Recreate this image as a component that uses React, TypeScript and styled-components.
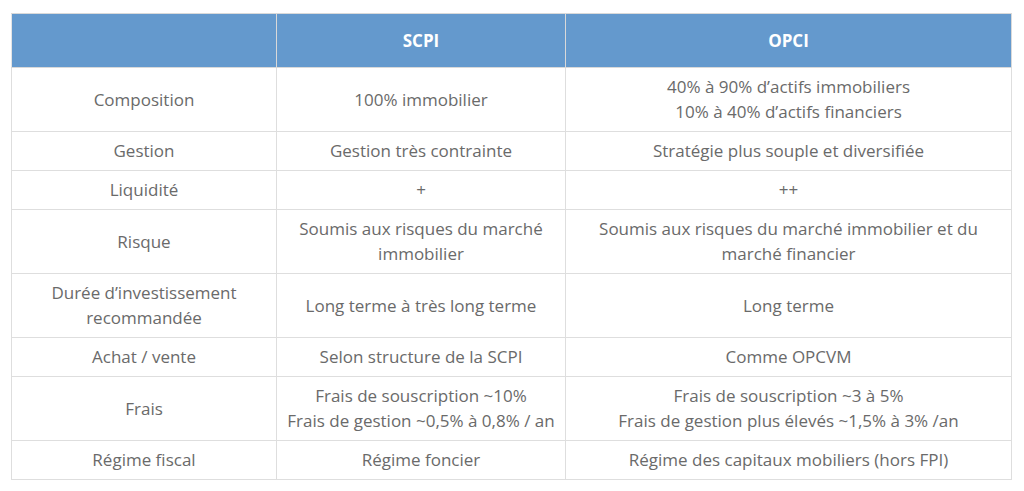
import React from 'react';
import styled, { createGlobalStyle } from 'styled-components';

const GlobalStyle = createGlobalStyle`
  body {
    margin: 0;
    background: #fff;
    font-family: "Open Sans", "Liberation Sans", sans-serif;
  }
`;

const Page = styled.div`
  padding: 13px 0 0 11px;
`;

const Table = styled.table`
  border-collapse: collapse;
  width: 1000px;
  table-layout: fixed;
  font-size: 17px;
  line-height: 25px;
  color: #6a6a6a;
`;

const HeadCell = styled.th`
  background: #6499cd;
  color: #fff;
  font-weight: 700;
  font-size: 17px;
  padding: 14px 4px;
  border: 1px solid #d9d9d9;
  border-left-color: #e4e4e4;
  text-align: center;
`;

const Cell = styled.td`
  padding: 6px 4px 7px;
  border: 1px solid #dedede;
  text-align: center;
  vertical-align: middle;
`;

type Row = { label: React.ReactNode; scpi: React.ReactNode; opci: React.ReactNode };

const rows: Row[] = [
  {
    label: 'Composition',
    scpi: '100% immobilier',
    opci: (
      <>
        40% à 90% d’actifs immobiliers
        <br />
        10% à 40% d’actifs financiers
      </>
    ),
  },
  { label: 'Gestion', scpi: 'Gestion très contrainte', opci: 'Stratégie plus souple et diversifiée' },
  { label: 'Liquidité', scpi: '+', opci: '++' },
  {
    label: 'Risque',
    scpi: (
      <>
        Soumis aux risques du marché
        <br />
        immobilier
      </>
    ),
    opci: (
      <>
        Soumis aux risques du marché immobilier et du
        <br />
        marché financier
      </>
    ),
  },
  {
    label: (
      <>
        Durée d’investissement
        <br />
        recommandée
      </>
    ),
    scpi: 'Long terme à très long terme',
    opci: 'Long terme',
  },
  { label: 'Achat / vente', scpi: 'Selon structure de la SCPI', opci: 'Comme OPCVM' },
  {
    label: 'Frais',
    scpi: (
      <>
        Frais de souscription ~10%
        <br />
        Frais de gestion ~0,5% à 0,8% / an
      </>
    ),
    opci: (
      <>
        Frais de souscription ~3 à 5%
        <br />
        Frais de gestion plus élevés ~1,5% à 3% /an
      </>
    ),
  },
  { label: 'Régime fiscal', scpi: 'Régime foncier', opci: 'Régime des capitaux mobiliers (hors FPI)' },
];

export default function App() {
  return (
    <Page>
      <GlobalStyle />
      <Table>
        <colgroup>
          <col style={{ width: 265 }} />
          <col style={{ width: 289 }} />
          <col style={{ width: 446 }} />
        </colgroup>
        <thead>
          <tr>
            <HeadCell />
            <HeadCell>SCPI</HeadCell>
            <HeadCell>OPCI</HeadCell>
          </tr>
        </thead>
        <tbody>
          {rows.map((r, i) => (
            <tr key={i}>
              <Cell>{r.label}</Cell>
              <Cell>{r.scpi}</Cell>
              <Cell>{r.opci}</Cell>
            </tr>
          ))}
        </tbody>
      </Table>
    </Page>
  );
}
